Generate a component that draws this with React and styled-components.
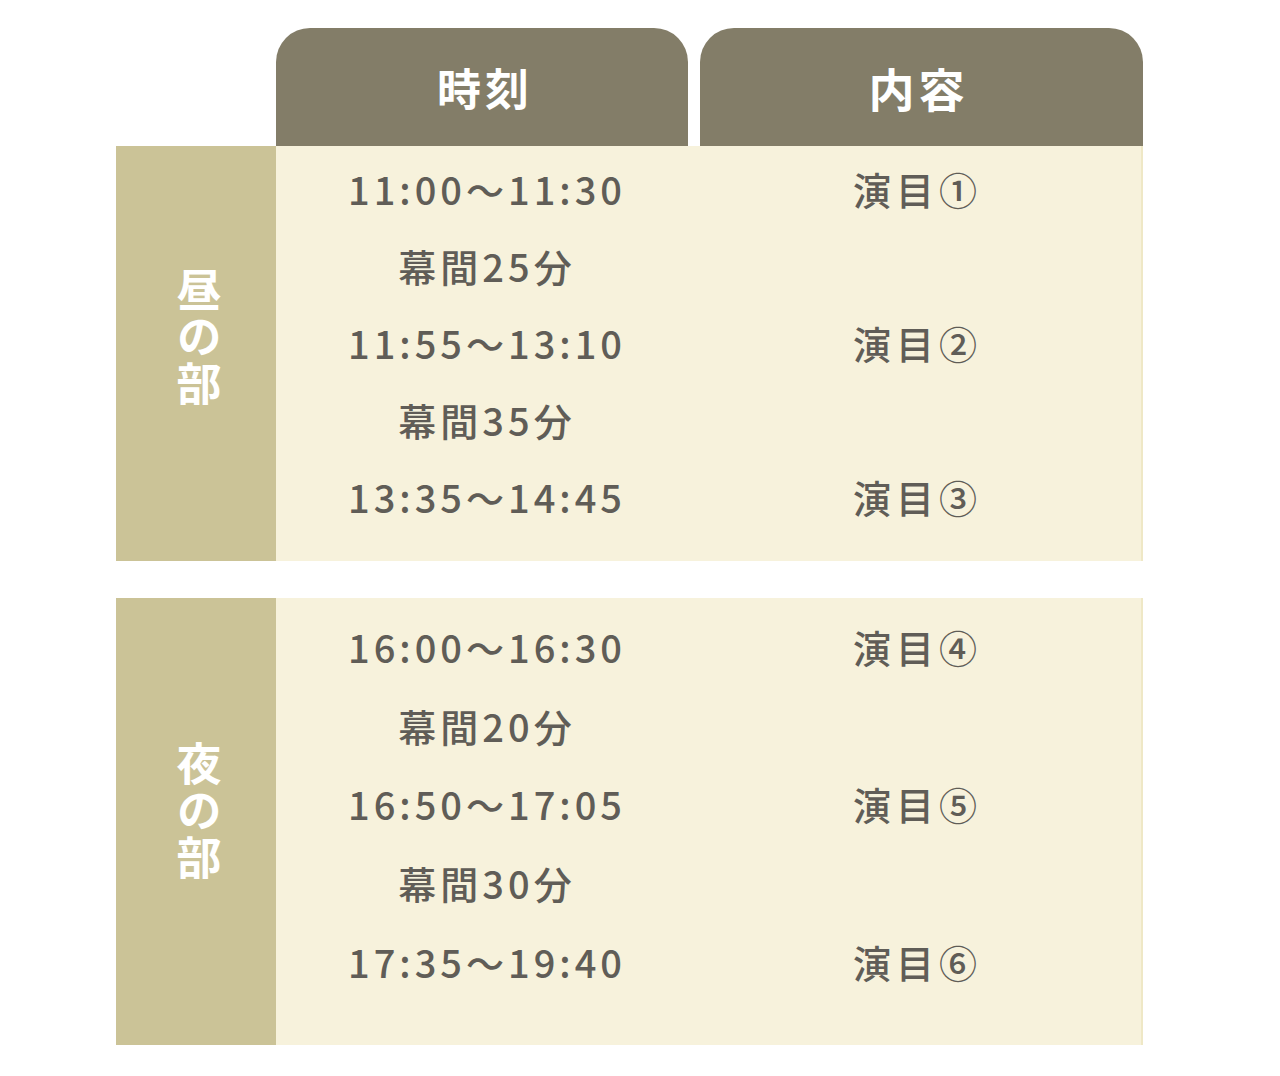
import React from "react";
import styled, { createGlobalStyle } from "styled-components";

const Global = createGlobalStyle`
  html, body { margin: 0; padding: 0; background: #ffffff; }
  body { font-family: "Noto Sans CJK JP", "Noto Sans", sans-serif; }
`;

const Page = styled.div`
  width: 1280px;
  height: 1076px;
  padding: 28px 0 0 116px;
  box-sizing: border-box;
`;

const HeaderRow = styled.div`
  display: flex;
  gap: 12px;
  padding-left: 160px;
`;

const Tab = styled.div`
  width: ${(p) => p.$w}px;
  height: 118px;
  background: #837d68;
  border-radius: 34px 34px 0 0;
  display: flex;
  align-items: center;
  justify-content: center;
  color: #ffffff;
  font-size: ${(p) => p.$fs}px;
  font-weight: 700;
  letter-spacing: 4px;
  padding: 0 ${(p) => p.$pr}px 0 ${(p) => p.$pl}px;
  box-sizing: border-box;
`;

const Section = styled.div`
  display: flex;
  width: 1027px;
  margin-bottom: 37px;
`;

const Side = styled.div`
  width: 160px;
  flex: none;
  background: #cbc397;
  display: flex;
  align-items: center;
  justify-content: center;
  padding-bottom: ${(p) => p.$shift}px;
  box-sizing: border-box;
`;

const SideLabel = styled.div`
  writing-mode: vertical-rl;
  text-orientation: upright;
  color: #ffffff;
  font-size: 45px;
  font-weight: 700;
  letter-spacing: 2px;
  line-height: 1;
  margin-left: 6px;
`;

const Body = styled.div`
  flex: 1;
  background: #f7f2dc;
  border-right: 2px solid #efe8c6;
  padding: ${(p) => p.$pt}px 0 ${(p) => p.$pb}px;
  box-sizing: border-box;
`;

const Row = styled.div`
  display: grid;
  grid-template-columns: 412px 1fr;
  height: ${(p) => p.$h}px;
  align-items: center;
  color: #605d57;
  font-size: 38px;
  font-weight: 500;
`;

const TimeCell = styled.div`
  text-align: center;
  letter-spacing: 4px;
  padding-left: 10px;
`;

const ContentCell = styled.div`
  text-align: center;
  letter-spacing: 5px;
  padding-left: 6px;
`;

const sections = [
  {
    label: "昼の部",
    shift: 32,
    pt: 4,
    pb: 26,
    h: 77,
    rows: [
      ["11:00〜11:30", "演目①"],
      ["幕間25分", ""],
      ["11:55〜13:10", "演目②"],
      ["幕間35分", ""],
      ["13:35〜14:45", "演目③"],
    ],
  },
  {
    label: "夜の部",
    shift: 20,
    pt: 9,
    pb: 44,
    h: 78.75,
    rows: [
      ["16:00〜16:30", "演目④"],
      ["幕間20分", ""],
      ["16:50〜17:05", "演目⑤"],
      ["幕間30分", ""],
      ["17:35〜19:40", "演目⑥"],
    ],
  },
];

export default function App() {
  return (
    <>
      <Global />
      <Page>
        <HeaderRow>
          <Tab $w={412} $pl={6} $pr={0} $fs={44}>時刻</Tab>
          <Tab $w={443} $pl={0} $pr={6} $fs={46}>内容</Tab>
        </HeaderRow>
        {sections.map((s) => (
          <Section key={s.label}>
            <Side $shift={s.shift}>
              <SideLabel>{s.label}</SideLabel>
            </Side>
            <Body $pt={s.pt} $pb={s.pb}>
              {s.rows.map(([t, c], i) => (
                <Row key={i} $h={s.h}>
                  <TimeCell>{t}</TimeCell>
                  <ContentCell>{c}</ContentCell>
                </Row>
              ))}
            </Body>
          </Section>
        ))}
      </Page>
    </>
  );
}
